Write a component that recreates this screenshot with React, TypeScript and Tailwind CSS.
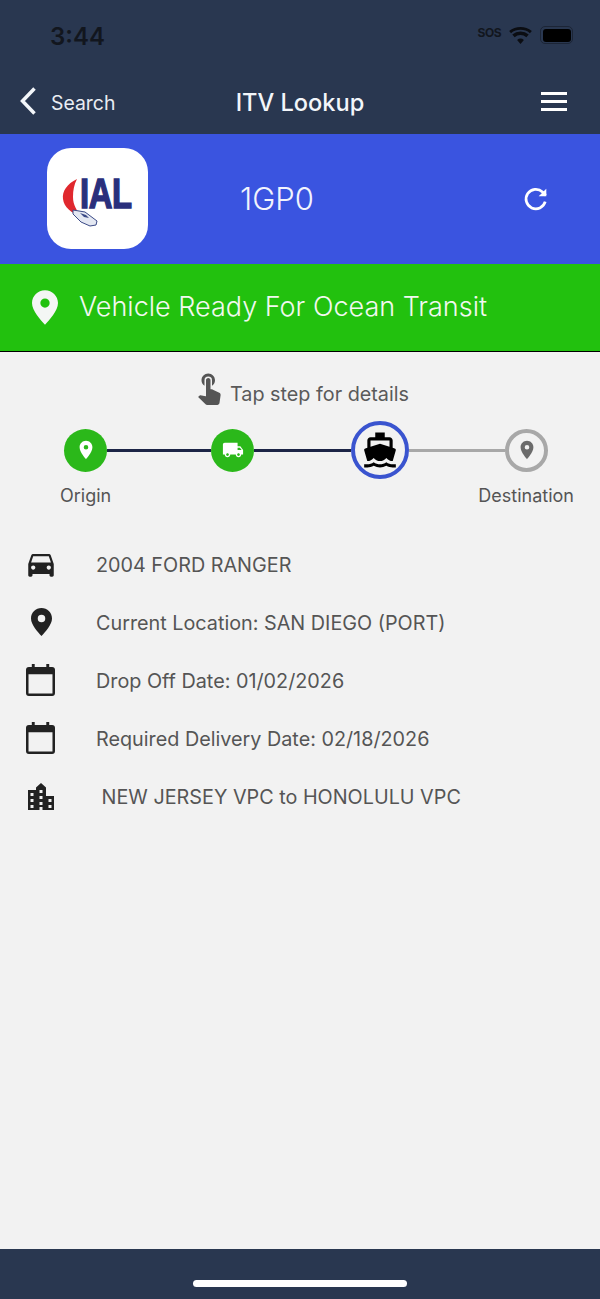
import { MdDirectionsBoat, MdDirectionsCar, MdLocalShipping, MdLocationOn, MdTouchApp } from 'react-icons/md';

function Pin({ className }: { className: string }) {
  return (
    <svg viewBox="0 0 24 32" className={className} fill="currentColor">
      <path fillRule="evenodd" d="M12 0C5.4 0 0 5.3 0 11.9 0 19 8 27.5 12 32c4-4.5 12-13 12-20.1C24 5.300 18.600 0 12 0zm0 16.200a4.300 4.300 0 1 1 0-8.600 4.300 4.300 0 0 1 0 8.600z" />
    </svg>
  );
}

function Calendar() {
  return (
    <svg viewBox="0 0 30 33" className="mr-[1px] h-[32px] w-[29px]" fill="#222">
      <path fillRule="evenodd" d="M3 3h3V0h3v3h12V0h3v3h3a3 3 0 0 1 3 3v24a3 3 0 0 1-3 3H3a3 3 0 0 1-3-3V6a3 3 0 0 1 3-3zm-.4 7.500V30.400h24.800V10.500z" />
    </svg>
  );
}

function City() {
  return (
    <svg viewBox="0 0 26 27" className="h-[27px] w-[26px]" fill="#222">
      <path
        fillRule="evenodd"
        d="M0 7h8V4.500L13 0l5 4.500V13h8v14H0zM2.500 10v3h3v-3zm0 6v3h3v-3zm0 6v3h3v-3zM11.500 7v3h3V7zm0 6v3h3v-3zm0 6v3h3v-3zm0 5v3h3v-3zM20.500 16v3h3v-3zm0 6v3h3v-3z"
      />
    </svg>
  );
}

function Logo() {
  return (
    <div className="relative mb-[1px] h-[101px] w-[101px] shrink-0 rounded-[24px] bg-white">
      <svg viewBox="0 0 101 101" className="absolute inset-0 h-full w-full">
        <path d="M30 31C20 36 15 43 16 51c1 8 8 14 19 18-5-6-9-12-9-20 0-7 1-12 4-18z" fill="#e0282e" />
        <path d="M26 62l12 2 8 6 4 3-1 4-6 1-9-4-8-8z" fill="#e4e8f2" stroke="#3b4a86" strokeWidth="1" />
        <path d="M33 65l6 2 3 3-5-1z" fill="#3b4a86" />
      </svg>
      <span className="absolute left-[33px] top-[23px] origin-left scale-x-[0.78] font-['Liberation_Sans',sans-serif] text-[42px] font-bold leading-[46px] tracking-[-0.5px] text-[#2a2f7c] [-webkit-text-stroke:1.5px_#2a2f7c]">
        IAL
      </span>
    </div>
  );
}

function DetailRow({ icon, text }: { icon: React.ReactNode; text: string }) {
  return (
    <div className="flex h-[58px] items-center">
      <div className="flex w-[96px] shrink-0 justify-center pr-[14px]">{icon}</div>
      <span className="mt-[3px] whitespace-pre text-[19.8px] text-[#555]">{text}</span>
    </div>
  );
}

export default function App() {
  return (
    <div className="flex h-[1299px] w-[600px] flex-col overflow-hidden bg-[#f2f2f2] font-['Inter',sans-serif]">
      {/* Header */}
      <div className="h-[134px] shrink-0 bg-[#293750]">
        <div className="flex h-[70px] items-center justify-between pl-[50px] pr-[27px]">
          <span className="mt-[4px] text-[24px] font-semibold text-[#12161e]">3:44</span>
          <div className="flex items-center gap-[8px]">
            <span className="mb-[4px] text-[12px] font-bold leading-none tracking-[-0.5px] text-[#12161e]">SOS</span>
            <svg viewBox="0 0 24 18" className="h-[17px] w-[23px]" fill="#0b0d12">
              <path d="M12 18l-3.600-4.200a5.500 5.500 0 0 1 7.200 0zM5.800 10.800L3.300 8a13.500 13.500 0 0 1 17.400 0l-2.500 2.800a9.700 9.700 0 0 0-12.400 0zM0 4.200C6.700-1.400 17.300-1.400 24 4.200l-2 2.300C16.300 1.800 7.700 1.800 2 6.500z" />
            </svg>
            <div className="flex h-[18px] w-[33px] items-center rounded-[5px] border border-[#1c2536] p-[1.500px]">
              <div className="h-full w-full rounded-[3px] bg-black" />
            </div>
          </div>
        </div>
        <div className="relative flex h-[64px] items-center justify-between pb-[2px] pl-[20px] pr-[33px]">
          <div className="flex items-center gap-[15px]">
            <svg viewBox="0 0 16 28" className="h-[28px] w-[16px]" fill="none" stroke="#f3f6fa" strokeWidth="3.500">
              <path d="M14.500 1.500L2.500 14l12 12.500" />
            </svg>
            <span className="mt-[6px] text-[19.4px] text-[#e9edf3]">Search</span>
          </div>
          <span className="absolute left-0 right-0 mt-[4px] text-center text-[23.6px] font-medium text-[#f3f6fa]">ITV Lookup</span>
          <div className="flex w-[26px] flex-col gap-[5px]">
            <div className="h-[3px] bg-white" />
            <div className="h-[3px] bg-white" />
            <div className="h-[3px] bg-white" />
          </div>
        </div>
      </div>

      {/* Vehicle bar */}
      <div className="flex h-[130px] shrink-0 items-center bg-[#3a54e0] pl-[47px] pr-[51px]">
        <Logo />
        <span className="ml-[92px] text-[31px] font-light text-[#f2f4fd]">1GP0</span>
        <svg viewBox="0 0 24 24" className="ml-auto h-[26px] w-[26px]" fill="none" stroke="#fff" strokeWidth="2.500">
          <path d="M20.500 14.500A9 9 0 1 1 18 5.500L21 8.500" />
          <path d="M21.500 2.500V9.500H14.500" fill="#fff" stroke="none" />
        </svg>
      </div>

      {/* Status */}
      <div className="flex h-[88px] shrink-0 items-center border-b border-black bg-[#22c10e] pl-[32px]">
        <Pin className="h-[35px] w-[26px] text-[#f4f6f4]" />
        <span className="ml-[21px] text-[27px] font-light text-[#f2f8f0]">Vehicle Ready For Ocean Transit</span>
      </div>

      {/* Stepper */}
      <div className="flex h-[69px] shrink-0 items-end justify-center pb-[13px]">
        <MdTouchApp className="mb-[3px] mr-[3px] h-[36px] w-[36px] text-[#555]" />
        <span className="text-[19.8px] leading-[28px] text-[#5a5a5a]">Tap step for details</span>
      </div>
      <div className="flex h-[58px] shrink-0 items-center pl-[64px] pr-[52px]">
        <div className="flex h-[43px] w-[43px] shrink-0 items-center justify-center rounded-full bg-[#2bb81a]">
          <MdLocationOn className="h-[22px] w-[22px] text-white" />
        </div>
        <div className="h-[3px] w-[104px] shrink-0 bg-[#1d2547]" />
        <div className="flex h-[43px] w-[43px] shrink-0 items-center justify-center rounded-full bg-[#2bb81a]">
          <MdLocalShipping className="h-[22px] w-[22px] text-white" />
        </div>
        <div className="h-[3px] flex-1 bg-[#1d2547]" />
        <div className="flex h-[58px] w-[58px] shrink-0 items-center justify-center rounded-full border-[4px] border-[#3a54cf] bg-[#f2f2f2]">
          <MdDirectionsBoat className="h-[38px] w-[38px] text-black" />
        </div>
        <div className="h-[3px] flex-1 bg-[#a8a8a8]" />
        <div className="flex h-[43px] w-[43px] shrink-0 items-center justify-center rounded-full border-[4px] border-[#a8a8a8] bg-[#f2f2f2]">
          <MdLocationOn className="h-[22px] w-[22px] text-[#6b6b6b]" />
        </div>
      </div>
      <div className="flex h-[32px] shrink-0 items-center justify-between pl-[60px] pr-[26px] text-[18px] text-[#555]">
        <span>Origin</span>
        <span>Destination</span>
      </div>

      {/* Details */}
      <div className="mt-[24px] flex flex-col">
        <DetailRow icon={<MdDirectionsCar className="h-[34px] w-[34px] text-[#222]" />} text="2004 FORD RANGER" />
        <DetailRow icon={<Pin className="h-[30px] w-[21px] text-[#222]" />} text="Current Location: SAN DIEGO (PORT)" />
        <DetailRow icon={<Calendar />} text="Drop Off Date: 01/02/2026" />
        <DetailRow icon={<Calendar />} text="Required Delivery Date: 02/18/2026" />
        <DetailRow icon={<City />} text=" NEW JERSEY VPC to HONOLULU VPC" />
      </div>

      {/* Home bar */}
      <div className="mt-auto flex h-[50px] shrink-0 items-end justify-center bg-[#293750] pb-[12px]">
        <div className="h-[7px] w-[214px] rounded-full bg-white" />
      </div>
    </div>
  );
}
